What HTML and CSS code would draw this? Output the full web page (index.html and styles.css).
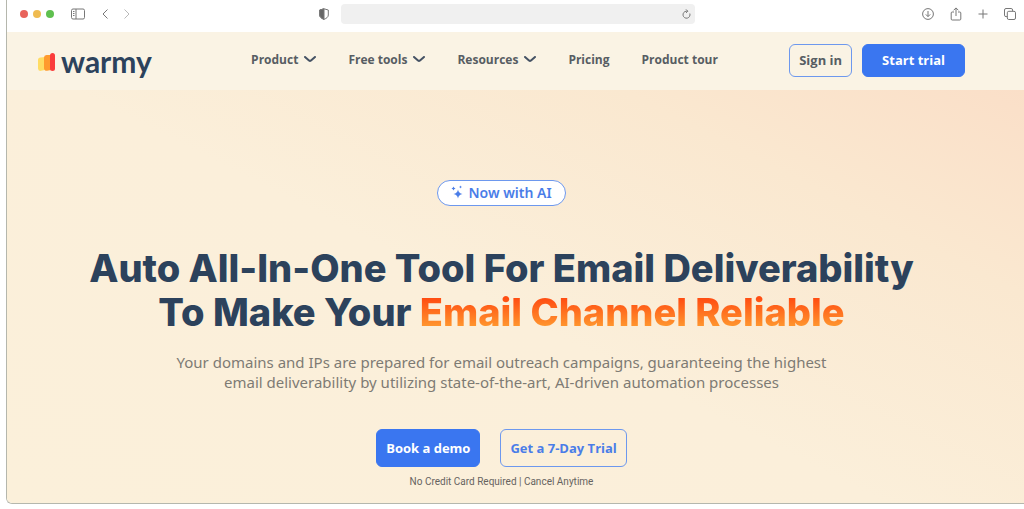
FILE: index.html
```
<!DOCTYPE html>
<html lang="en">
<head>
    <meta charset="UTF-8" />
    <meta name="viewport" content="width=device-width, initial-scale=1" />
    <title>Warmy - Email Deliverability Tool</title>
    <link rel="stylesheet" href="styles.css">
</head>
<body>
    <div class="window">
        <!-- browser bar -->
        <div class="toolbar">
            <div class="dots">
                <span class="dot red"></span>
                <span class="dot yellow"></span>
                <span class="dot green"></span>
            </div>
            <button class="tool sidebar" aria-label="Sidebar">
                <svg width="14" height="12" viewBox="0 0 14 12"><rect x=".5" y="1" width="13" height="10" rx="1.5"/><path d="M5 1v10M2 3.5h1.5M2 5.5h1.5M2 7.5h1.5"/></svg>
            </button>
            <button class="tool back" aria-label="Back">
                <svg width="6" height="10" viewBox="0 0 6 10"><path d="M5.5.5 1 5l4.500 4.500"/></svg>
            </button>
            <button class="tool forward" aria-label="Forward">
                <svg width="6" height="10" viewBox="0 0 6 10"><path d="M.5.5 5 5 .5 9.500"/></svg>
            </button>
            <div class="address">
                <button class="tool" aria-label="Privacy report">
                    <svg width="10" height="12" viewBox="0 0 10 12"><path d="M5 .8 9.300 2v5c0 2-1.600 3.200-4.300 4.400C2.300 10.200.7 9 .7 7V2z"/><path d="M5 .8v10.600C2.300 10.200.7 9 .7 7V2z" fill="#666"/></svg>
                </button>
                <div class="url">
                    <input type="text" aria-label="Address">
                    <button class="tool" aria-label="Reload">
                        <svg width="9" height="10" viewBox="0 0 9 10"><path d="M7.800 4.500A3.500 3.500 0 1 1 4.300 2.200h1.300M4 .4l1.800 1.800L4 3.900"/></svg>
                    </button>
                </div>
            </div>
            <div class="actions">
                <button class="tool" aria-label="Downloads">
                    <svg width="12" height="12" viewBox="0 0 12 12"><circle cx="6" cy="6" r="5.400"/><path d="M6 3v5.500M3.800 6.400 6 8.600l2.200-2.200"/></svg>
                </button>
                <button class="tool" aria-label="Share">
                    <svg width="12" height="14" viewBox="0 0 12 14"><path d="M4 5H2.200a1 1 0 0 0-1 1v6a1 1 0 0 0 1 1h7.600a1 1 0 0 0 1-1V6a1 1 0 0 0-1-1H8M6 9V1M3.600 3.300 6 .9l2.400 2.400"/></svg>
                </button>
                <button class="tool" aria-label="New tab">
                    <svg width="10" height="10" viewBox="0 0 10 10"><path d="M5 .5v9M.5 5h9"/></svg>
                </button>
                <button class="tool" aria-label="Tabs">
                    <svg width="12" height="12" viewBox="0 0 12 12"><rect x="3.300" y="3.300" width="8.200" height="8.200" rx="1.500"/><path d="M3.300 8.600H2A1.500 1.500 0 0 1 .5 7.100V2A1.500 1.500 0 0 1 2 .5h5.100A1.500 1.500 0 0 1 8.600 2v1.300"/></svg>
                </button>
            </div>
        </div>

        <header class="header">
            <a href="#" class="logo">
                <svg width="18" height="18" viewBox="0 0 18 18">
                    <path d="M2.500 4.500 7 4v13l-4 .8A2.500 2.500 0 0 1 0 15.500V7a2.500 2.500 0 0 1 2.500-2.500z" fill="#ffdc64"/>
                    <path d="M8.500 2 13 2v15l-4 .8A2.500 2.500 0 0 1 6 15.300V4.700A2.700 2.700 0 0 1 8.500 2z" fill="#ff9a2e"/>
                    <rect x="12" width="5" height="18" rx="2.500" fill="#fa3c3c"/>
                </svg>
                <span>warmy</span>
            </a>
            <nav class="nav">
                <a href="#">Product <svg width="12" height="6" viewBox="0 0 12 6"><path d="M1 1l4 3.500q1 .8 2 0L11 1"/></svg></a>
                <a href="#">Free tools <svg width="12" height="6" viewBox="0 0 12 6"><path d="M1 1l4 3.500q1 .8 2 0L11 1"/></svg></a>
                <a href="#">Resources <svg width="12" height="6" viewBox="0 0 12 6"><path d="M1 1l4 3.500q1 .8 2 0L11 1"/></svg></a>
                <a href="#">Pricing</a>
                <a href="#">Product tour</a>
            </nav>
            <div class="account">
                <button class="btn btn-signin">Sign in</button>
                <button class="btn btn-primary btn-start">Start trial</button>
            </div>
        </header>

        <main class="hero">
            <div class="badge">
                <svg width="12" height="14" viewBox="0 0 12 14"><path d="M7 4.500q.6 3.900 4.500 4.500Q7.600 9.600 7 13.500 6.400 9.600 2.500 9 6.400 8.400 7 4.500zM2.500 1.500q.4 1.600 2 2-1.600.4-2 2-.4-1.600-2-2 1.600-.4 2-2zM9.500.5q.2 1.300 1.500 1.500-1.300.2-1.500 1.500Q9.300 2.200 8 2 9.300 1.800 9.500.5z"/></svg>
                <span>Now with AI</span>
            </div>
            <h1>Auto All-In-One Tool For Email Deliverability<br>To Make Your <span class="accent">Email Channel Reliable</span></h1>
            <p class="lead">Your domains and IPs are prepared for email outreach campaigns, guaranteeing the highest<br>email deliverability by utilizing state-of-the-art, AI-driven automation processes</p>
            <div class="cta">
                <button class="btn btn-primary">Book a demo</button>
                <button class="btn">Get a 7-Day Trial</button>
            </div>
            <p class="note">No Credit Card Required | Cancel Anytime</p>
        </main>
    </div>
</body>
</html>
```
FILE: styles.css
```
* {
    box-sizing: border-box;
}

body {
    margin: 0;
    padding: 0 0 5px 6px;
    background: #fff;
    font-family: "Open Sans", sans-serif;
    overflow-x: hidden;
}

button {
    font-family: inherit;
    cursor: pointer;
}

a {
    color: inherit;
    text-decoration: none;
}

.window {
    display: flex;
    flex-direction: column;
    min-height: calc(100vh - 5px);
    border-left: 1px solid #b5b7ad;
    border-bottom: 1px solid #b5b7ad;
    border-bottom-left-radius: 6px;
    overflow: hidden;
}

/* browser bar */
.toolbar {
    display: flex;
    align-items: center;
    height: 32px;
    padding: 0 8px 4px 13px;
    background: #fff;
}

.dots {
    display: flex;
    gap: 5px;
}

.dot {
    width: 8px;
    height: 8px;
    border-radius: 50%;
}

.red { background: #e8635b; }
.yellow { background: #efbb50; }
.green { background: #5fc04f; }

.tool {
    display: flex;
    padding: 0;
    border: 0;
    background: none;
}

.tool svg {
    fill: none;
    stroke: #777;
    stroke-width: 1;
}

.sidebar {
    margin-left: 17px;
}

.back {
    margin-left: 17px;
}

.forward {
    margin-left: 16px;
    opacity: 0.5;
}

.address {
    flex: 1;
    display: flex;
    align-items: center;
    justify-content: center;
    gap: 12px;
    padding-right: 38px;
}

.url {
    display: flex;
    align-items: center;
    width: 45%;
    min-width: 354px;
    height: 20px;
    padding-right: 4px;
    border-radius: 4px;
    background: #f0f0f0;
}

.url input {
    flex: 1;
    border: 0;
    outline: 0;
    background: none;
}

.actions {
    display: flex;
    align-items: center;
    gap: 16px;
}

/* site header */
.header {
    display: flex;
    align-items: center;
    justify-content: space-between;
    height: 58px;
    padding: 0 59px 2px 31px;
    background: #faf3e4;
}

.logo {
    display: flex;
    align-items: center;
    gap: 5px;
    padding-top: 4px;
    color: #2c425c;
    font-family: Lato, sans-serif;
    font-size: 30px;
    font-weight: bold;
    line-height: 36px;
}

.logo span {
    padding-bottom: 2px;
}

.nav {
    display: flex;
    gap: 32px;
    margin-left: 28px;
    padding-bottom: 2px;
    color: #575d63;
    font-size: 12px;
    font-weight: 700;
}

.nav a {
    display: flex;
    align-items: center;
    gap: 6px;
}

.nav svg {
    fill: none;
    stroke: #455264;
    stroke-width: 2;
    stroke-linecap: round;
}

.account {
    display: flex;
    gap: 10px;
}

.btn {
    height: 38px;
    padding: 0 9px;
    border: 1px solid #6d98ee;
    border-radius: 6px;
    background: none;
    color: #4a7de8;
    font-size: 13px;
    font-weight: bold;
    white-space: nowrap;
}

.btn-signin {
    height: 33px;
    color: #575d63;
}

.btn-primary {
    border-color: #3a76f0;
    background: #3a76f0;
    color: #fff;
}

.btn-start {
    height: 33px;
    padding: 0 19px;
}

/* hero */
.hero {
    flex: 1;
    display: flex;
    flex-direction: column;
    align-items: center;
    padding: 90px 28px 12px 0;
    background: linear-gradient(207deg, #fadfc8 0%, #fae8d0 22%, #fbefda 52%, #fbf0da 100%);
    text-align: center;
}

.badge {
    display: flex;
    align-items: center;
    justify-content: center;
    gap: 5px;
    height: 26px;
    padding: 0 13px 2px;
    border: 1px solid #6d98ee;
    border-radius: 13px;
    background: #fff;
    color: #4a7de8;
    font-family: "Noto Sans", sans-serif;
    font-size: 14px;
    font-weight: 600;
}

.badge svg {
    fill: #4a7de8;
}

h1 {
    margin: 40px 0 0;
    color: #2c425c;
    font-family: Inter, sans-serif;
    font-size: 38px;
    font-weight: 800;
    line-height: 44px;
}

.accent {
    background: linear-gradient(#ff4d12 20%, #ff9a30 85%);
    -webkit-background-clip: text;
    background-clip: text;
    color: transparent;
}

.lead {
    margin: 18px 0 0;
    color: #7e7b74;
    font-family: "Noto Sans", sans-serif;
    font-size: 15px;
    line-height: 20px;
}

.cta {
    display: flex;
    gap: 20px;
    margin-top: 37px;
}

.note {
    margin: 9px 0 0;
    color: #66635f;
    font-family: Roboto, sans-serif;
    font-size: 10px;
    line-height: 12px;
}
```
